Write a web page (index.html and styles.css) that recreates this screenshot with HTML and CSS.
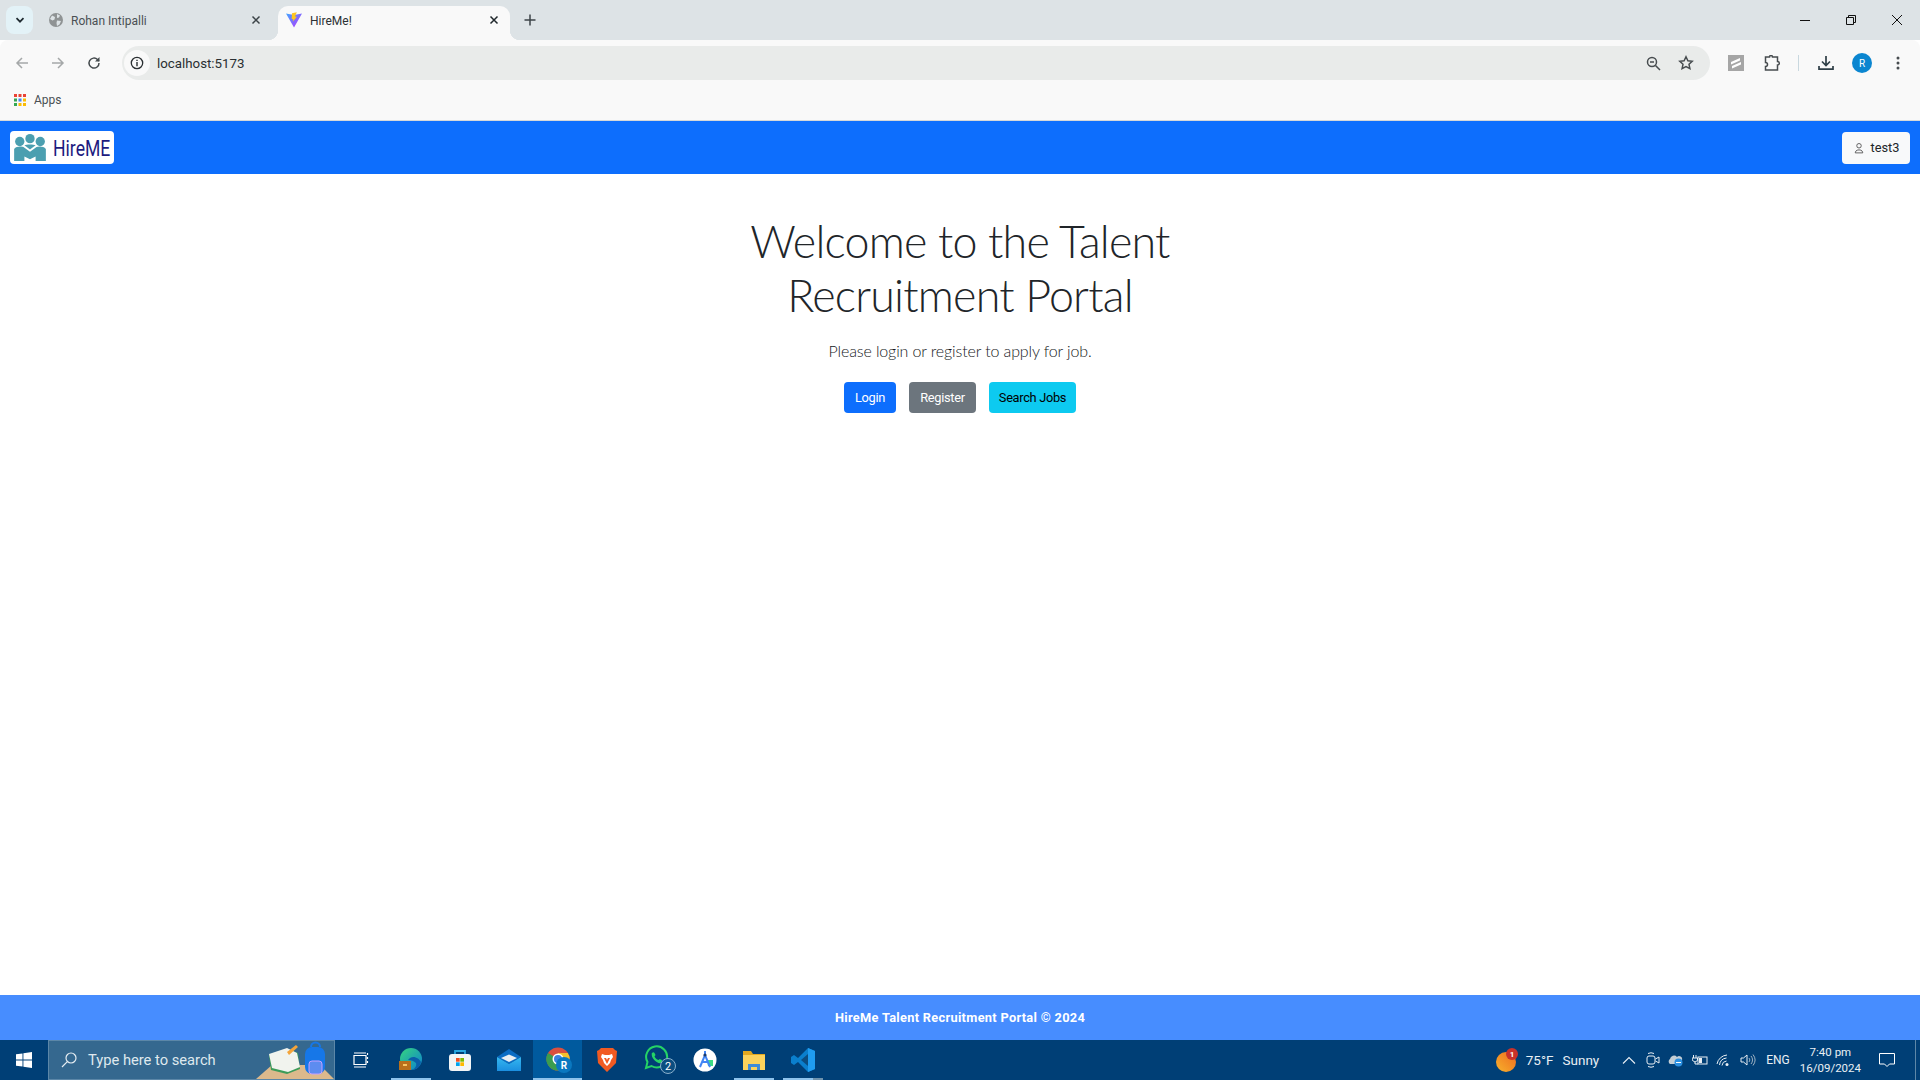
FILE: index.html
```html
<!DOCTYPE html>
<html lang="en">
<head>
<meta charset="utf-8">
<title>HireMe!</title>
<link rel="stylesheet" href="styles.css">
</head>
<body>
<div class="tabstrip">
  <div class="tabsearch"><svg width="12" height="12" viewBox="0 0 12 12"><path d="M2.500 4.200 6 7.700l3.500-3.500" fill="none" stroke="#1f2a30" stroke-width="1.700"/></svg></div>
  <div class="tab tab-bg">
    <svg class="favicon" width="14" height="14" viewBox="0 0 14 14"><circle cx="7" cy="7" r="7" fill="#8f9394"/><path d="M3 2.500 6 4 5.500 6.500 3.500 7.500 1 6ZM8 1l3 1.500-1 2-2 .5ZM8 7.500l4 .5-1.500 3.500L8 13l-.5-3Z" fill="#dde3e6"/></svg>
    <span class="tabtitle">Rohan Intipalli</span>
    <svg class="tabclose" width="10" height="10" viewBox="0 0 10 10"><path d="M1.500 1.500l7 7m0-7-7 7" stroke="#3c4448" stroke-width="1.500"/></svg>
  </div>
  <div class="tab tab-active">
    <svg class="favicon" width="16" height="16" viewBox="0 0 16 16"><defs><linearGradient id="vg" x1="0" y1="0" x2="1" y2="1"><stop offset="0" stop-color="#41a5ff"/><stop offset="1" stop-color="#bd34fe"/></linearGradient></defs><path d="M0 1.500 8 3l8-1.500L8 15.500Z" fill="url(#vg)"/><path d="M10.800 .2 6 1.200 5.700 7l1.500.3-.4 2.200L11 4.800l-2-.3Z" fill="#ffc61f"/></svg>
    <span class="tabtitle">HireMe!</span>
    <svg class="tabclose" width="10" height="10" viewBox="0 0 10 10"><path d="M1.500 1.500l7 7m0-7-7 7" stroke="#20282c" stroke-width="1.500"/></svg>
  </div>
  <svg class="newtab" width="12" height="12" viewBox="0 0 12 12"><path d="M6 .5v11M.5 6h11" stroke="#3c4448" stroke-width="1.500"/></svg>
  <div class="winctrls">
    <svg width="12" height="12" viewBox="0 0 12 12"><path d="M1 6.500h10" stroke="#111" stroke-width="1"/></svg>
    <svg width="12" height="12" viewBox="0 0 12 12"><path d="M1.500 3.500h7v7h-7ZM3.500 3.500v-2h7v7h-2" fill="none" stroke="#111" stroke-width="1"/></svg>
    <svg width="12" height="12" viewBox="0 0 12 12"><path d="M1 1l10 10m0-10L1 11" stroke="#111" stroke-width="1"/></svg>
  </div>
</div>
<div class="chrome">
  <div class="toolbar">
    <div class="navbtns">
      <svg width="14" height="14" viewBox="0 0 14 14"><path d="M13 7H2M7 2 2 7l5 5" fill="none" stroke="#a5a8a9" stroke-width="1.500"/></svg>
      <svg width="14" height="14" viewBox="0 0 14 14"><path d="M1 7h11M7 2l5 5-5 5" fill="none" stroke="#a5a8a9" stroke-width="1.500"/></svg>
      <svg width="14" height="14" viewBox="0 0 14 14"><path d="M12 7a5 5 0 1 1-1.500-3.500L12 5" fill="none" stroke="#444a4d" stroke-width="1.500"/><path d="M12.500 1v4.500H8Z" fill="#444a4d"/></svg>
    </div>
    <div class="omnibox">
      <div class="siteinfo"><svg width="14" height="14" viewBox="0 0 14 14"><circle cx="7" cy="7" r="5.700" fill="none" stroke="#2a2f32" stroke-width="1.300"/><path d="M7 6v4.200M7 3.800v1.300" stroke="#2a2f32" stroke-width="1.400"/></svg></div>
      <span class="url">localhost:5173</span>
      <svg class="omni-zoom" width="15" height="15" viewBox="0 0 15 15"><circle cx="6" cy="6" r="4.500" fill="none" stroke="#474c4f" stroke-width="1.500"/><path d="M9.500 9.500 14 14M4 6h4" stroke="#474c4f" stroke-width="1.500"/></svg>
      <svg class="omni-star" width="16" height="16" viewBox="0 0 16 16"><path d="m8 1.800 1.900 4 4.300.5-3.200 3 .9 4.300L8 11.500l-3.900 2.100.9-4.300-3.200-3 4.300-.5Z" fill="none" stroke="#474c4f" stroke-width="1.500"/></svg>
    </div>
    <div class="toolicons">
      <svg class="ti-ext" width="16" height="16" viewBox="0 0 16 16"><rect width="16" height="16" fill="#a6a6a6"/><path d="m3 7 9-4v2.500L3 9.500ZM4 11l9-4v2.500L4 13.500Z" fill="#fff"/></svg>
      <svg class="ti-puzzle" width="17" height="17" viewBox="0 0 17 17"><path d="M1.500 2h4a1.500 1.500 0 0 1 3 0h5v4.500a1.800 1.800 0 0 1 0 3.600V15h-12v-3.500a2 2 0 0 0 0-4Z" fill="none" stroke="#474c4f" stroke-width="1.500"/></svg>
      <span class="ti-sep"></span>
      <svg class="ti-dl" width="16" height="16" viewBox="0 0 16 16"><path d="M8 1v9M4 6.500 8 10.500l4-4" fill="none" stroke="#2f3f47" stroke-width="1.700"/><path d="M1 11v3.200h14V11" fill="none" stroke="#2f3f47" stroke-width="1.700"/></svg>
      <span class="avatar">R</span>
      <svg class="ti-menu" width="4" height="14" viewBox="0 0 4 14"><circle cx="2" cy="2" r="1.500" fill="#474c4f"/><circle cx="2" cy="7" r="1.500" fill="#474c4f"/><circle cx="2" cy="12" r="1.500" fill="#474c4f"/></svg>
    </div>
  </div>
  <div class="bookmarks">
    <svg width="12" height="12" viewBox="0 0 12 12"><rect x="0" width="3" height="3" fill="#ea4335"/><rect x="4.500" width="3" height="3" fill="#ea4335"/><rect x="9" width="3" height="3" fill="#ea4335"/><rect x="0" y="4.500" width="3" height="3" fill="#34a853"/><rect x="4.500" y="4.500" width="3" height="3" fill="#4285f4"/><rect x="9" y="4.500" width="3" height="3" fill="#fbbc05"/><rect x="0" y="9" width="3" height="3" fill="#34a853"/><rect x="4.500" y="9" width="3" height="3" fill="#fbbc05"/><rect x="9" y="9" width="3" height="3" fill="#fbbc05"/></svg>
    <span>Apps</span>
  </div>
</div>

<nav class="navbar">
  <a class="brand">
    <svg class="brandicon" width="32" height="28" viewBox="0 0 34 30"><g fill="#4b9fb0"><circle cx="17" cy="5" r="5"/><circle cx="6" cy="8" r="5"/><circle cx="28" cy="8" r="5"/><path d="M0 16c2-3 8-3 10-2l7 5 7-5c2-1 8-1 10 2v13H23v-5l-6 3-6-3v5H0Z"/><path d="M11 12c2-1 10-1 12 0l-6 4.500Z"/></g></svg>
    <span class="brandtext">HireME</span>
  </a>
  <button class="userbtn">
    <svg width="12" height="12" viewBox="0 0 16 16"><path d="M8 8a3 3 0 1 0 0-6 3 3 0 0 0 0 6Zm5 6.500c0-1.500-1-4-5-4s-5 2.500-5 4Z" fill="none" stroke="#555" stroke-width="1.200"/></svg>
    <span>test3</span>
  </button>
</nav>

<main class="main">
  <h1 class="title">Welcome to the Talent Recruitment Portal</h1>
  <p class="lead">Please login or register to apply for job.</p>
  <div class="actions">
    <a class="btn btn-primary">Login</a>
    <a class="btn btn-secondary">Register</a>
    <a class="btn btn-info">Search Jobs</a>
  </div>
</main>

<footer class="footer">HireMe Talent Recruitment Portal © 2024</footer>

<div class="taskbar">
  <div class="start"><svg width="16" height="16" viewBox="0 0 16 16"><path d="M0 2.300 6.500 1.400v6.200H0ZM7.400 1.300 16 0v7.600H7.400ZM0 8.400h6.500v6.200L0 13.700ZM7.400 8.400H16V16l-8.600-1.300Z" fill="#fff"/></svg></div>
  <div class="searchbox">
    <svg width="16" height="16" viewBox="0 0 16 16"><circle cx="10" cy="6" r="5" fill="none" stroke="#e6edf2" stroke-width="1.200"/><path d="M6.300 9.700 1 15" stroke="#e6edf2" stroke-width="1.200"/></svg>
    <span class="searchtext">Type here to search</span>
    <svg class="searchart" width="78" height="38" viewBox="0 0 78 38"><path d="M0 38 16 24h48l14 14Z" fill="#dcb98c"/><path d="M13 14 32 8l10 4 2 16-13 5-16-4Z" fill="#3d9c59"/><path d="M13 13 31 7l10 5 3 14-12 5-16-4Z" fill="#f1f3ee"/><path d="M31 11l9-7 2 2-9 8Z" fill="#f4a43a"/><rect x="49" y="6" width="20" height="27" rx="7" fill="#1677e8"/><rect x="53" y="20" width="13" height="13" rx="3" fill="#5d8cf0" stroke="#c4a0ff"/><path d="M55 6a4.500 4.500 0 0 1 9 0" fill="none" stroke="#1677e8" stroke-width="2"/></svg>
  </div>
  <div class="apps">
    <div class="app app-taskview"><svg width="18" height="16" viewBox="0 0 18 16"><path d="M3 1h12M3 3.500h12v9H3ZM3 15h12M16.500 1v2M16.500 5v2M16.500 9v2" fill="none" stroke="#fff" stroke-width="1.200"/></svg></div>
    <div class="app app-open"><svg width="24" height="24" viewBox="0 0 24 24"><defs><linearGradient id="eg" x1="0" y1="0" x2="1" y2="1"><stop offset="0" stop-color="#36d67e"/><stop offset="1" stop-color="#0c7fd0"/></linearGradient></defs><circle cx="12" cy="11" r="11" fill="url(#eg)"/><path d="M9 12c4-6 11-2 13 2-1 6-6 8-10 8 4-1 6-4 5-7-2-2-5-3-8-3Z" fill="#0a5ea8"/><rect x="0" y="13" width="12" height="9" fill="#b8701c"/><rect x="4" y="16" width="4" height="2" fill="#f7c35f"/></svg></div>
    <div class="app"><svg width="24" height="24" viewBox="0 0 24 24"><path d="M7 7V3h10v4" fill="none" stroke="#29a7e1" stroke-width="1.800"/><rect x="1" y="6" width="22" height="17" rx="3" fill="#f3f5f6"/><rect x="8" y="10" width="3.700" height="3.700" fill="#f25022"/><rect x="12.300" y="10" width="3.700" height="3.700" fill="#7fba00"/><rect x="8" y="14.300" width="3.700" height="3.700" fill="#00a4ef"/><rect x="12.300" y="14.300" width="3.700" height="3.700" fill="#ffb900"/></svg></div>
    <div class="app"><svg width="24" height="22" viewBox="0 0 24 22"><defs><linearGradient id="mg" x1="0" y1="0" x2="0" y2="1"><stop offset="0" stop-color="#35b8f0"/><stop offset="1" stop-color="#1b8fe0"/></linearGradient></defs><path d="M12 0 24 8 12 15 0 8Z" fill="#0a6cc4"/><path d="m4 9 8-3.500L20 9l-8 4Z" fill="#e9eef2"/><path d="M0 8l12 7 12-7v14H0Z" fill="url(#mg)"/></svg></div>
    <div class="app app-active app-chrome"><svg width="27" height="27" viewBox="0 0 27 27"><circle cx="12" cy="12" r="11.500" fill="#d9503f"/><path d="M12 12h11A11.500 11.500 0 0 0 21.900 6L12 6Z" fill="#f2c12e"/><path d="M23 8h-8l-3 15.500A11.500 11.500 0 0 0 23 8Z" fill="#f2c12e"/><path d="M12 12 2 6a11.500 11.500 0 0 0 10 17.500Z" fill="#3a9d4f"/><circle cx="12" cy="12" r="5.500" fill="#fff"/><circle cx="12" cy="12" r="4" fill="#3b82e0"/><circle cx="18" cy="18" r="8" fill="#0a78c0"/><text class="badgetext" x="18" y="21.500">R</text></svg></div>
    <div class="app"><svg width="20" height="24" viewBox="0 0 20 24"><path d="M4 0h12l2 2 2 1-1 12-9 9-9-9L0 3l2-1Z" fill="#f15a22"/><path d="m5 6 3 1h4l3-1 1 3-2 3-1 3-3 3-3-3-1-3-2-3Z" fill="#fff"/><path d="M7 10h2l1 2 1-2h2l-3 6Z" fill="#f15a22"/></svg></div>
    <div class="app app-wa"><svg width="33" height="30" viewBox="0 0 33 30"><path d="M3 23 4.500 17a10.500 10.500 0 1 1 4 4Z" fill="none" stroke="#25d366" stroke-width="2"/><path d="M9 8c1-1 2-1 2.500 0l1 2-1 1.500c1 2 2 3 4 3.500l1.300-1 2 1c.7.500.5 2-1 3-3 1-10-4-9-10Z" fill="#25d366"/><circle cx="25" cy="21" r="7.500" fill="#0b4d80" stroke="#8ab0cc"/><text class="badgetext2" x="25" y="25">2</text></svg></div>
    <div class="app"><svg width="24" height="24" viewBox="0 0 24 24"><circle cx="12" cy="12" r="11.500" fill="#fff"/><path d="M14 12l6 0 0 6-5 0Z" fill="#3ddc84"/><path d="M12 3v4M7 19l5-12 5 12M8.500 14h7" fill="none" stroke="#4285f4" stroke-width="2"/><circle cx="12" cy="7" r="1.600" fill="#1a3a6e"/></svg></div>
    <div class="app app-open"><svg width="22" height="20" viewBox="0 0 22 20"><path d="M0 1h8l2 3h12v4H0Z" fill="#e3a81f"/><path d="M0 5h22v15H0Z" fill="#fbd25c"/><path d="M5 20v-6h12v6h-3v-3H8v3Z" fill="#3f8bd8"/></svg></div>
    <div class="app app-open app-last"><svg width="24" height="24" viewBox="0 0 24 24"><path d="M17 0 7 10 3 7 0 9v6l3 2 4-3 10 10 7-3V3Z" fill="#0a7fcd"/><path d="M17 6 10 12l7 6Z" fill="#0b4d80"/><path d="M17 0l7 3v18l-7 3Z" fill="#1f9cf0"/></svg></div>
  </div>
  <div class="tray">
    <svg class="weather" width="22" height="24" viewBox="0 0 22 24"><defs><linearGradient id="wg" x1="0" y1="1" x2="1" y2="0"><stop offset="0" stop-color="#f7b22c"/><stop offset="1" stop-color="#ee6a1f"/></linearGradient></defs><circle cx="10" cy="14" r="10" fill="url(#wg)"/><circle cx="16" cy="6" r="6" fill="#c8322b"/><text class="weathernum" x="16" y="9">1</text></svg>
    <span class="temp">75°F</span>
    <span class="cond">Sunny</span>
    <div class="trayicons">
      <svg class="traycaret" width="14" height="8" viewBox="0 0 14 8"><path d="M1 7.500 7 1.500l6 6" fill="none" stroke="#e9eff4" stroke-width="1.100"/></svg>
      <svg width="14" height="16" viewBox="0 0 14 16"><rect x="1" y="4" width="8" height="8" rx="2" fill="none" stroke="#e9eff4"/><path d="m9.500 7 3.500-2v6L9.500 9M2 1.500q3-1.500 6 0M2 14.500q3 1.500 6 0" fill="none" stroke="#e9eff4"/></svg>
      <svg width="16" height="14" viewBox="0 0 16 14"><path d="M2 11a3 3 0 0 1 0-5 4 4 0 0 1 7-2 3 3 0 0 1 5 3v1H8v3Z" fill="#c3ced6"/><circle cx="10.500" cy="9.500" r="4" fill="#2b8fe0"/><path d="M8 9.500h5" stroke="#fff"/></svg>
      <svg width="16" height="12" viewBox="0 0 16 12"><rect x="6" y="3" width="9" height="7" fill="none" stroke="#e9eff4"/><rect x="7" y="4" width="3" height="5" fill="#e9eff4"/><path d="M0 4h5.500v2.500L3 8 .5 6.500ZM1.500 1v3M4 1v3M3 8v2h3" fill="none" stroke="#e9eff4"/></svg>
      <svg width="16" height="14" viewBox="0 0 16 14"><path d="M1 11a11 11 0 0 1 10-9M3.500 12a8 8 0 0 1 7-7M6 12.500a5 5 0 0 1 4.500-4.500" fill="none" stroke="#e9eff4"/><circle cx="11" cy="11.500" r="1.500" fill="#e9eff4"/></svg>
      <svg width="16" height="14" viewBox="0 0 16 14"><path d="M1 5h2.500L7 2v10L3.500 9H1Z" fill="none" stroke="#e9eff4"/><path d="M9 5a3 3 0 0 1 0 4M11 3a6 6 0 0 1 0 8M13 1.500a9 9 0 0 1 0 11" fill="none" stroke="#9fb3c4"/></svg>
    </div>
    <span class="lang">ENG</span>
    <div class="clock"><span>7:40 pm</span><span>16/09/2024</span></div>
    <svg class="notif" width="16" height="15" viewBox="0 0 16 15"><path d="M.5.500h15v10.500h-5L8 13.500 5.500 11h-5Z" fill="none" stroke="#fff"/></svg>
    <span class="showdesk"></span>
  </div>
</div>
</body>
</html>
```

FILE: styles.css
```css
* { box-sizing: border-box; }
html, body { margin: 0; height: 100%; }
body {
  display: flex;
  flex-direction: column;
  height: 100vh;
  overflow: hidden;
  background: #fff;
  font-family: Roboto, "Liberation Sans", sans-serif;
  color: #212529;
}

/* browser tab strip */
.tabstrip {
  height: 40px;
  flex: none;
  display: flex;
  align-items: flex-end;
  padding-left: 6px;
  background: #dde3e6;
}
.tabsearch {
  flex: none;
  width: 27px;
  height: 28px;
  margin-bottom: 6px;
  border-radius: 8px;
  background: #e3f2f7;
  display: flex;
  align-items: center;
  justify-content: center;
}
.tab {
  flex: none;
  height: 34px;
  display: flex;
  align-items: center;
  border-radius: 10px 10px 0 0;
  font-size: 12px;
  color: #4a5054;
}
.tab-bg {
  width: 245px;
  padding: 0 17px 6px 16px;
}
.tab-active {
  width: 232px;
  padding: 0 11px 6px 8px;
  position: relative;
  background: #f9f9f9;
  color: #2c3134;
}
.tab-active::before,
.tab-active::after {
  content: "";
  position: absolute;
  bottom: 0;
  width: 10px;
  height: 10px;
}
.tab-active::before { left: -10px; background: radial-gradient(circle at 0 0, transparent 10px, #f9f9f9 10.500px); }
.tab-active::after { right: -10px; background: radial-gradient(circle at 100% 0, transparent 10px, #f9f9f9 10.500px); }
.favicon { flex: none; }
.tabtitle { margin-left: 8px; padding-top: 2px; flex: 1; white-space: nowrap; }
.tabclose { flex: none; }
.newtab { margin: 0 0 14px 14px; flex: none; }
.winctrls {
  margin-left: auto;
  margin-bottom: 14px;
  padding-right: 17px;
  display: flex;
  gap: 34px;
}

/* toolbar */
.chrome { flex: none; height: 81px; background: #f9f9f9; border-bottom: 1px solid #d6d8d9; border-radius: 8px 8px 0 0; }
.toolbar { height: 40px; padding-top: 6px; display: flex; align-items: center; }
.navbtns { width: 122px; padding-left: 15px; display: flex; gap: 22px; }
.omnibox {
  width: 1588px;
  height: 34px;
  border-radius: 17px;
  background: #e9ebea;
  display: flex;
  align-items: center;
  padding: 0 16px 0 2px;
}
.siteinfo {
  width: 26px;
  height: 26px;
  border-radius: 50%;
  background: #f9f9f9;
  display: flex;
  align-items: center;
  justify-content: center;
}
.url { margin-left: 7px; font-size: 13.300px; color: #2a2f32; flex: 1; }
.omni-star { margin-left: 17px; }
.toolicons { display: flex; align-items: center; padding-left: 18px; }
.ti-ext { flex: none; }
.ti-puzzle { margin-left: 20px; }
.ti-sep { width: 1px; height: 16px; margin-left: 17px; background: #c9d8df; }
.ti-dl { margin-left: 19px; }
.avatar {
  width: 20px;
  height: 20px;
  margin-left: 18px;
  border-radius: 50%;
  background: #0b86d0;
  color: #fff;
  font-size: 10px;
  display: flex;
  align-items: center;
  justify-content: center;
}
.ti-menu { margin-left: 24px; }
.bookmarks {
  height: 40px;
  padding: 0 0 0 14px;
  display: flex;
  align-items: center;
  gap: 8px;
  font-size: 12px;
  color: #4a5054;
}

/* page */
.navbar {
  height: 53px;
  flex: none;
  background: #0d6efd;
  padding: 0 10px;
  display: flex;
  align-items: center;
  justify-content: space-between;
}
.brand {
  width: 104px;
  height: 33px;
  padding-left: 4px;
  background: #fff;
  border-radius: 4px;
  display: flex;
  align-items: center;
  gap: 7px;
  overflow: hidden;
}
.brandicon { flex: none; }
.brandtext {
  display: inline-block;
  margin-top: 2px;
  font-weight: 400;
  font-size: 22px;
  color: #1d1a80;
  transform: scaleX(.8);
  transform-origin: left center;
}
.userbtn {
  width: 68px;
  height: 32px;
  padding: 0;
  border: 0;
  border-radius: 4px;
  background: #f8f9fa;
  display: flex;
  align-items: center;
  justify-content: center;
  gap: 6px;
  font-family: inherit;
  font-size: 12.800px;
  color: #212529;
}
.main {
  flex: 1;
  display: flex;
  flex-direction: column;
  align-items: center;
  padding-top: 40px;
  text-align: center;
}
.title {
  width: 480px;
  margin: 0 0 17px;
  font-family: Lato, Roboto, sans-serif;
  font-size: 44.800px;
  font-weight: 300;
  line-height: 54px;
  letter-spacing: -.78px;
}
.lead {
  margin: 0 0 19px;
  font-family: Lato, Roboto, sans-serif;
  font-size: 16px;
  font-weight: 300;
  line-height: 24px;
  letter-spacing: -.12px;
  color: #15181b;
}
.actions { display: flex; gap: 13px; }
.btn {
  height: 31px;
  border-radius: 4px;
  display: flex;
  align-items: center;
  justify-content: center;
  font-size: 12.800px;
  letter-spacing: -.3px;
}
.btn-primary { width: 52px; background: #0d6efd; color: #fff; }
.btn-secondary { width: 67px; background: #6c757d; color: #fff; }
.btn-info { width: 87px; background: #0dcaf0; color: #000; }
.footer {
  height: 45px;
  flex: none;
  background: #478dff;
  color: #fff;
  display: flex;
  align-items: center;
  justify-content: center;
  font-size: 12.800px;
  font-weight: 700;
  letter-spacing: .3px;
}

/* windows taskbar */
.taskbar {
  height: 40px;
  flex: none;
  background: #003f76;
  display: flex;
  align-items: center;
  color: #fff;
}
.start { width: 48px; display: flex; justify-content: center; }
.searchbox {
  width: 287px;
  height: 40px;
  padding-left: 12px;
  background: #35688f;
  border: 1px solid #5c87a8;
  display: flex;
  align-items: center;
  position: relative;
}
.searchtext { margin-left: 11px; font-size: 14.700px; color: #dfe8ee; white-space: nowrap; }
.searchart { position: absolute; right: 0; bottom: 0; }
.apps { display: flex; height: 40px; }
.app {
  width: 49px;
  height: 40px;
  display: flex;
  align-items: center;
  justify-content: center;
  position: relative;
}
.app-taskview { width: 51px; padding-right: 2px; }
.app-wa { padding-left: 8px; }
.app-chrome { padding-left: 3px; }
.app-open::after {
  content: "";
  position: absolute;
  left: 5px;
  right: 4px;
  bottom: 0;
  height: 2px;
  background: #8ec3ec;
}
.app-last::after { background: linear-gradient(90deg, #8ec3ec 75%, #6f93ad 75%); }
.app-active { background: #005a9e; }
.app-active::after {
  content: "";
  position: absolute;
  left: 0;
  right: 0;
  bottom: 0;
  height: 2px;
  background: #8ec3ec;
}
.badgetext { font-size: 10px; font-weight: 700; fill: #fff; text-anchor: middle; }
.badgetext2 { font-size: 11px; fill: #fff; text-anchor: middle; }
.weathernum { font-size: 8px; font-weight: 700; fill: #fff; text-anchor: middle; }
.tray {
  margin-left: auto;
  height: 40px;
  display: flex;
  align-items: center;
  font-size: 13.500px;
  color: #e9eff4;
}
.temp { margin-left: 8px; }
.cond { margin-left: 9px; }
.trayicons { margin-left: 23px; display: flex; align-items: center; gap: 8px; }
.traycaret { margin-right: 2px; }
.lang { margin-left: 10px; font-size: 12px; }
.clock {
  margin-left: 10px;
  display: flex;
  flex-direction: column;
  align-items: center;
  font-size: 11.500px;
  line-height: 16px;
}
.notif { margin-left: 18px; }
.showdesk { width: 1px; height: 40px; margin-left: 20px; margin-right: 4px; background: #5d87a8; }
```
